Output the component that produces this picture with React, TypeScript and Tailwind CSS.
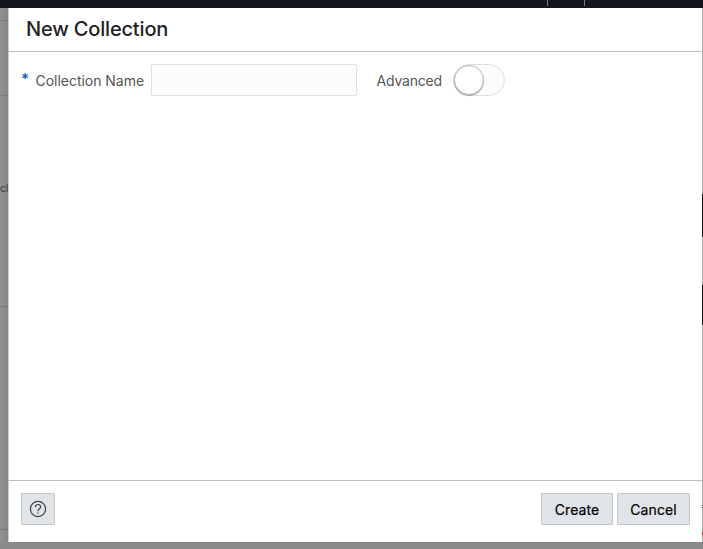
import type { ReactNode } from 'react';

function FooterButton({ children, className }: { children: ReactNode; className: string }) {
  return (
    <button
      type="button"
      className={`flex h-8 shrink-0 items-center justify-center rounded-[1px] border border-[#c4c8cb] bg-[#e0e4e7] text-[14px] font-normal leading-5 tracking-[0.1px] text-black [-webkit-text-stroke:0.2px_black] ${className}`}
    >
      {children}
    </button>
  );
}

function HelpIcon() {
  return (
    <svg width="18" height="18" viewBox="0 0 18 18" fill="none" stroke="#3c4043" strokeWidth="1.2">
      <circle cx="9" cy="9" r="7.6" />
      <path d="M6.4 7.1C6.4 5.5 7.5 4.5 9 4.5s2.6 1 2.6 2.4c0 1.9-2.6 2-2.6 4.3" />
      <path d="M9 12.4v1.3" />
    </svg>
  );
}

function LeftBackdrop() {
  return (
    <div className="flex w-2 shrink-0 flex-col overflow-hidden bg-gradient-to-r from-[#929292] to-[#858585] font-['Inter'] text-[11px] font-medium text-[#4a4a4a]">
      <div className="h-[13px] shrink-0 border-b border-[#7b7b7b]" />
      <div className="h-[75px] shrink-0 border-b border-[#7b7b7b]" />
      <div className="h-[211px] shrink-0 border-b border-[#777777] pt-[84px] leading-4 tracking-[-0.3px]">cl</div>
      <div className="h-[223px] shrink-0 border-b border-[#777777]" />
    </div>
  );
}

function RightBackdrop() {
  return (
    <div className="w-px shrink-0 bg-[#aaaaaa]">
      <div className="h-[186px]" />
      <div className="h-[43px] bg-[#12161f]" />
      <div className="h-12" />
      <div className="h-10 bg-[#12161f]" />
      <div className="h-[180px]" />
      <div className="h-px bg-[#555555]" />
      <div className="h-px" />
      <div className="h-px bg-[#555555]" />
      <div className="h-6" />
      <div className="h-[3px] bg-[#c72d1c]" />
    </div>
  );
}

export default function App() {
  return (
    <div className="flex h-[549px] w-[703px] flex-col overflow-hidden bg-[#898989] font-['Inter',sans-serif]">
      <div className="flex h-2 shrink-0 bg-[#12161f] pl-[547px]">
        <div className="h-1.5 w-px bg-[#777a7f]" />
        <div className="ml-9 h-1.5 w-px bg-[#777a7f]" />
      </div>
      <div className="flex h-[534px] shrink-0">
        <LeftBackdrop />
        <div className="flex min-w-0 flex-1 flex-col border-l border-[#cccccc] bg-white">
          <header className="h-11 shrink-0 border-b border-[#bfbfbf] pl-[17px] pt-[7px]">
            <h1 className="text-[20px] font-medium leading-7 tracking-[-0.17px] text-[#222222]">New Collection</h1>
          </header>
          <main className="flex flex-1 items-start pl-3 pt-3 text-[14px] text-[#555555]">
            <span className="w-[14.5px] shrink-0 pt-[5px] text-[15px] font-semibold leading-5 text-[#0f62a5]">*</span>
            <label htmlFor="collection-name" className="w-[115.5px] shrink-0 whitespace-nowrap pt-[7px] leading-5 tracking-[-0.03px]">
              Collection Name
            </label>
            <input
              id="collection-name"
              className="h-8 w-[206px] shrink-0 rounded-[2px] border border-[#dfdfdf] bg-[#fcfcfc] px-2 outline-none"
            />
            <span className="ml-[19.5px] w-[76.5px] shrink-0 pt-[7px] leading-5 tracking-[-0.2px]">Advanced</span>
            <button
              type="button"
              role="switch"
              aria-checked="false"
              aria-label="Advanced"
              className="flex h-8 w-[52px] shrink-0 rounded-full border border-[#dfdfdf] bg-[#fcfcfc]"
            >
              <span className="h-[30px] w-[30px] rounded-full border border-[#b8b8b8] bg-white shadow-[0_1px_1px_rgba(0,0,0,0.3)]" />
            </button>
          </main>
          <footer className="flex h-[62px] shrink-0 border-t border-[#bfbfbf] pl-3 pr-3 pt-3">
            <FooterButton className="w-[34px]">
              <HelpIcon />
            </FooterButton>
            <div className="ml-auto flex gap-1">
              <FooterButton className="w-[72px] pt-0.5">Create</FooterButton>
              <FooterButton className="w-[73px] pt-0.5">Cancel</FooterButton>
            </div>
          </footer>
        </div>
        <RightBackdrop />
      </div>
    </div>
  );
}
